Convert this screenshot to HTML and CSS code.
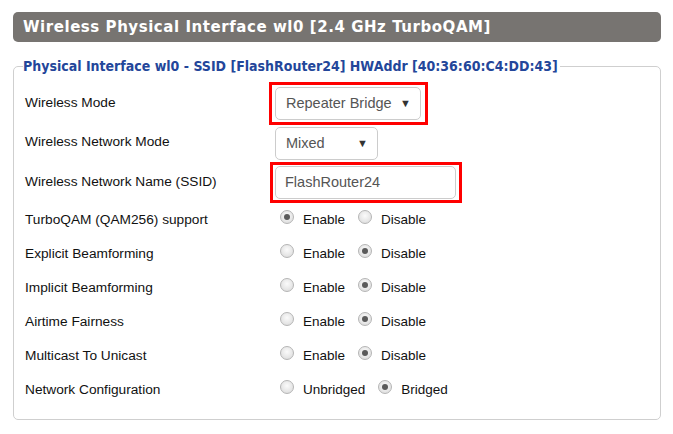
FILE: index.html
```html
<!DOCTYPE html>
<html>
<head>
<meta charset="utf-8">
<link rel="stylesheet" href="styles.css">
</head>
<body>
<div class="page">
  <h2 class="title">Wireless Physical Interface wl0 [2.4 GHz TurboQAM]</h2>
  <fieldset class="box">
    <legend class="legend">Physical Interface wl0 - SSID [FlashRouter24] HWAddr [40:36:60:C4:DD:43]</legend>
    <div class="row row-top row-mode">
      <span class="label">Wireless Mode</span>
      <div class="hl hl-select">
        <div class="select select-mode"><span>Repeater Bridge</span><span class="arrow">▼</span></div>
      </div>
    </div>
    <div class="row row-top row-net">
      <span class="label">Wireless Network Mode</span>
      <div class="select select-net"><span>Mixed</span><span class="arrow">▼</span></div>
    </div>
    <div class="row row-top row-ssid">
      <span class="label">Wireless Network Name (SSID)</span>
      <div class="hl hl-input">
        <div class="input">FlashRouter24</div>
      </div>
    </div>
    <div class="row">
      <span class="label">TurboQAM (QAM256) support</span>
      <div class="radios"><span class="radio on"></span><span class="rl">Enable</span><span class="radio"></span><span class="rl">Disable</span></div>
    </div>
    <div class="row">
      <span class="label">Explicit Beamforming</span>
      <div class="radios"><span class="radio"></span><span class="rl">Enable</span><span class="radio on"></span><span class="rl">Disable</span></div>
    </div>
    <div class="row">
      <span class="label">Implicit Beamforming</span>
      <div class="radios"><span class="radio"></span><span class="rl">Enable</span><span class="radio on"></span><span class="rl">Disable</span></div>
    </div>
    <div class="row">
      <span class="label">Airtime Fairness</span>
      <div class="radios"><span class="radio"></span><span class="rl">Enable</span><span class="radio on"></span><span class="rl">Disable</span></div>
    </div>
    <div class="row">
      <span class="label">Multicast To Unicast</span>
      <div class="radios"><span class="radio"></span><span class="rl">Enable</span><span class="radio on"></span><span class="rl">Disable</span></div>
    </div>
    <div class="row">
      <span class="label">Network Configuration</span>
      <div class="radios"><span class="radio"></span><span class="rl">Unbridged</span><span class="radio on"></span><span class="rl">Bridged</span></div>
    </div>
  </fieldset>
</div>
</body>
</html>
```

FILE: styles.css
```css
html, body {
  margin: 0;
  padding: 0;
  background: #fff;
}
body {
  font-family: "Liberation Sans", Arial, sans-serif;
  font-size: 13.7px;
  color: #111;
}
.page {
  padding: 12px 12px 0 13px;
}
.title {
  margin: 0;
  height: 30px;
  line-height: 30px;
  background: #777471;
  color: #fff;
  border-radius: 5px;
  padding: 0 10px;
  font-family: "DejaVu Sans", Verdana, sans-serif;
  font-weight: bold;
  font-size: 15px;
  letter-spacing: 0.55px;
}
.box {
  margin: 16px 0 0 0;
  border: 1px solid #cfcfcf;
  border-radius: 5px;
  padding: 8px 10px 13px 11px;
  min-width: 0;
}
.legend {
  padding: 0 2px 0 0;
  margin-left: -2px;
  font-family: "DejaVu Sans Condensed", "DejaVu Sans", sans-serif;
  font-weight: bold;
  font-size: 14px;
  color: #23469a;
}
.row {
  display: flex;
  align-items: center;
  height: 34px;
}
.row-top { align-items: flex-start; }
.row-mode { height: 43px; }
.row-mode .label { padding-top: 13px; }
.row-net { height: 37px; }
.row-net .label { padding-top: 9px; }
.row-ssid { height: 40px; }
.row-ssid .label { padding-top: 12px; }
.label {
  display: block;
  width: 250px;
  flex: none;
  line-height: 16px;
  padding-top: 1px;
}
.hl {
  border: 3px solid #f00;
  margin-left: -6px;
}
.hl-select { padding: 2px 4px 2px 3px; }
.hl-input { padding: 1px 3px 1px 2px; margin-left: -5px; }
.select {
  box-sizing: border-box;
  display: flex;
  align-items: center;
  justify-content: space-between;
  height: 33px;
  border: 1px solid #ccc;
  border-radius: 5px;
  padding: 0 9px 1px 10px;
  font-size: 14.5px;
  color: #555;
  background: #fff;
}
.select-mode { width: 146px; }
.select-net { width: 103px; margin-top: 2px; }
.arrow {
  font-size: 11px;
  color: #333;
}
.input {
  box-sizing: border-box;
  width: 181px;
  height: 33px;
  line-height: 31px;
  border: 1px solid #ccc;
  border-radius: 5px;
  padding: 0 9px;
  font-size: 14.5px;
  color: #555;
}
.radios {
  display: flex;
  align-items: center;
  margin-left: 5px;
}
.radio {
  box-sizing: border-box;
  width: 14px;
  height: 14px;
  border-radius: 50%;
  border: 1px solid #b5b5b5;
  background: radial-gradient(circle at 50% 40%, #fbfbfb 0%, #e6e6e6 60%, #d6d6d6 100%);
  position: relative;
  top: -2px;
  flex: none;
}
.radio.on::after {
  content: "";
  position: absolute;
  left: 3px;
  top: 3px;
  width: 6px;
  height: 6px;
  border-radius: 50%;
  background: #5a5a5a;
}
.rl {
  margin-left: 9px;
  margin-right: 13px;
  font-size: 13.5px;
  color: #111;
}
```
